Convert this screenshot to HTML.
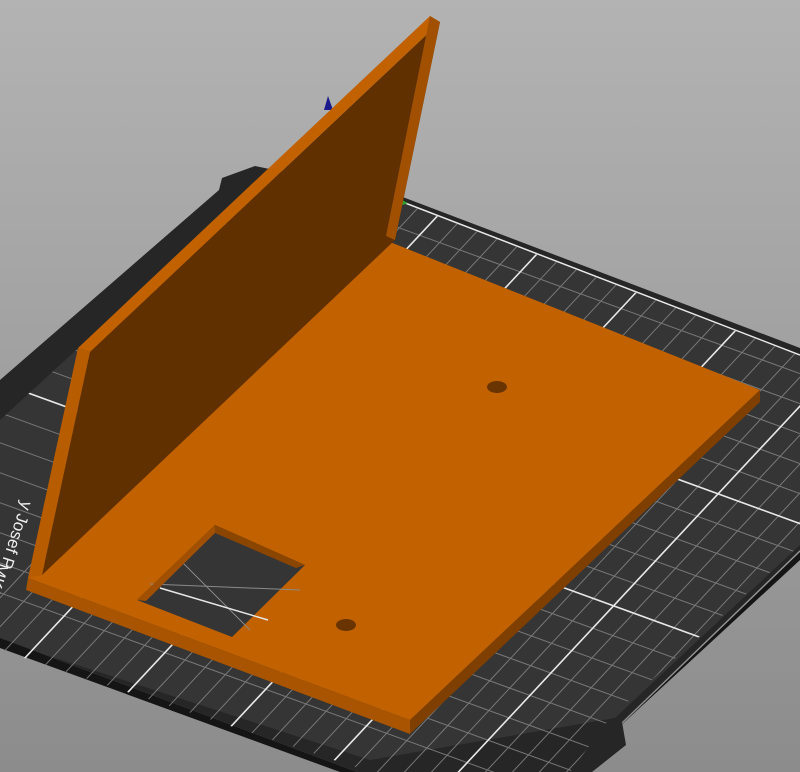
<!DOCTYPE html>
<html><head><meta charset="utf-8"><style>
html,body{margin:0;padding:0;width:800px;height:772px;overflow:hidden;background:#a0a0a0}
svg{display:block}
</style></head><body>
<svg width="800" height="772" viewBox="0 0 800 772" xmlns="http://www.w3.org/2000/svg">
<defs>
<linearGradient id="bg" x1="0" y1="0" x2="0" y2="1">
<stop offset="0" stop-color="#b3b3b3"/><stop offset="1" stop-color="#8c8c8c"/>
</linearGradient>
<clipPath id="gridclip"><polygon points="250,190 400,202 800,356 800,545 610,718 570,772 370,772 0,650 0,420"/></clipPath>
</defs>
<rect width="800" height="772" fill="url(#bg)"/>
<polygon points="219,190 222,178 255,166 400,196 800,348 800,550 622,722 626,745 592,772 357,772 0,638 0,380" fill="#262626"/>
<polygon points="250,190 400,202 800,356 800,545 615,718 370,760 0,640 0,420" fill="#353535"/>
<polygon points="0,638 357,772 340,772 0,648" fill="#151515"/>
<polygon points="800,552 622,724 618,728 800,560" fill="#151515"/>
<line x1="400" y1="201" x2="800" y2="355" stroke="#e8e8e8" stroke-width="1.5"/>
<g clip-path="url(#gridclip)" stroke="#8a8a8a" stroke-width="1" opacity="0.8">
<line x1="-200" y1="460" x2="900" y2="860"/>
<line x1="-200" y1="430" x2="900" y2="830"/>
<line x1="-200" y1="400" x2="900" y2="800"/>
<line x1="-200" y1="370" x2="900" y2="770"/>
<line x1="-200" y1="340" x2="900" y2="740"/>
<line x1="-200" y1="310" x2="900" y2="710"/>
<line x1="-200" y1="280" x2="900" y2="680"/>
<line x1="-200" y1="250" x2="900" y2="650"/>
<line x1="-200" y1="220" x2="900" y2="620"/>
<line x1="-200" y1="190" x2="900" y2="590"/>
<line x1="-200" y1="160" x2="900" y2="560"/>
<line x1="-200" y1="130" x2="900" y2="530"/>
<line x1="-200" y1="100" x2="900" y2="500"/>
<line x1="-200" y1="70" x2="900" y2="470"/>
<line x1="-200" y1="40" x2="900" y2="440"/>
<line x1="-200" y1="10" x2="900" y2="410"/>
<line x1="-200" y1="-20" x2="900" y2="380"/>
<line x1="-200" y1="-50" x2="900" y2="350"/>
<line x1="-200" y1="490" x2="900" y2="890"/>
<line x1="-200" y1="520" x2="900" y2="920"/>
<line x1="376" y1="195" x2="-184" y2="795"/>
<line x1="403" y1="195" x2="-157" y2="795"/>
<line x1="430" y1="195" x2="-130" y2="795"/>
<line x1="457" y1="195" x2="-103" y2="795"/>
<line x1="484" y1="195" x2="-76" y2="795"/>
<line x1="511" y1="195" x2="-49" y2="795"/>
<line x1="538" y1="195" x2="-22" y2="795"/>
<line x1="565" y1="195" x2="5" y2="795"/>
<line x1="592" y1="195" x2="32" y2="795"/>
<line x1="619" y1="195" x2="59" y2="795"/>
<line x1="646" y1="195" x2="86" y2="795"/>
<line x1="673" y1="195" x2="113" y2="795"/>
<line x1="700" y1="195" x2="140" y2="795"/>
<line x1="727" y1="195" x2="167" y2="795"/>
<line x1="754" y1="195" x2="194" y2="795"/>
<line x1="781" y1="195" x2="221" y2="795"/>
<line x1="808" y1="195" x2="248" y2="795"/>
<line x1="835" y1="195" x2="275" y2="795"/>
<line x1="862" y1="195" x2="302" y2="795"/>
<line x1="889" y1="195" x2="329" y2="795"/>
<line x1="916" y1="195" x2="356" y2="795"/>
<line x1="943" y1="195" x2="383" y2="795"/>
<line x1="970" y1="195" x2="410" y2="795"/>
<line x1="997" y1="195" x2="437" y2="795"/>
<line x1="1024" y1="195" x2="464" y2="795"/>
<line x1="1051" y1="195" x2="491" y2="795"/>
<line x1="1078" y1="195" x2="518" y2="795"/>
<line x1="1105" y1="195" x2="545" y2="795"/>
<line x1="1132" y1="195" x2="572" y2="795"/>
<line x1="1159" y1="195" x2="599" y2="795"/>
</g>
<g clip-path="url(#gridclip)" stroke="#e8e8e8" stroke-width="1.6">
<line x1="-200" y1="310" x2="900" y2="710"/>
<line x1="-200" y1="160" x2="900" y2="560"/>
<line x1="457" y1="195" x2="-103" y2="795"/>
<line x1="592" y1="195" x2="32" y2="795"/>
<line x1="727" y1="195" x2="167" y2="795"/>
<line x1="862" y1="195" x2="302" y2="795"/>
<line x1="997" y1="195" x2="437" y2="795"/>
<line x1="1132" y1="195" x2="572" y2="795"/>
<line x1="1145" y1="195" x2="585" y2="795"/>
</g>
<text x="0" y="0" transform="translate(22,500) rotate(108)" fill="#eee" font-family="Liberation Sans, sans-serif" font-size="17">y Josef P</text>
<text x="0" y="0" transform="translate(-2,562) rotate(108)" fill="#eee" font-family="Liberation Sans, sans-serif" font-size="17">MK3</text>
<polygon points="328,96 324,110 333,110" fill="#1a1a8c"/>
<polygon points="398,198 408,203 400,206" fill="#30a030"/>
<polygon points="28,578 410,720 410,734 26,590" fill="#a85400"/>
<polygon points="410,720 760,390 760,402 410,734" fill="#7e3f00"/>
<polygon points="390,242 760,390 410,720 28,578" fill="#c26100"/>
<polygon points="215,525 305,565 232,637 137,600" fill="#353535"/>
<g stroke="#8a8a8a" stroke-width="1">
<line x1="150" y1="584" x2="300" y2="590"/>
<line x1="180" y1="560" x2="250" y2="630"/>
</g>
<line x1="160" y1="588" x2="268" y2="620" stroke="#e8e8e8" stroke-width="1.5"/>
<polygon points="215,525 305,565 296,568 215,533" fill="#8a4500"/>
<polygon points="215,525 215,533 146,601 137,600" fill="#a05000"/>
<ellipse cx="497" cy="387" rx="10" ry="6" fill="#6a3400"/>
<ellipse cx="346" cy="625" rx="10" ry="6" fill="#6a3400"/>
<polygon points="90,352 440,22 395,240 42,575" fill="#603000"/>
<polygon points="78,348 90,352 42,575 28,578" fill="#b85c00"/>
<polygon points="78,348 430,16 440,22 90,352" fill="#c26100"/>
<polygon points="440,22 430,16 386,236 395,240" fill="#a05000"/>
</svg>
</body></html>
